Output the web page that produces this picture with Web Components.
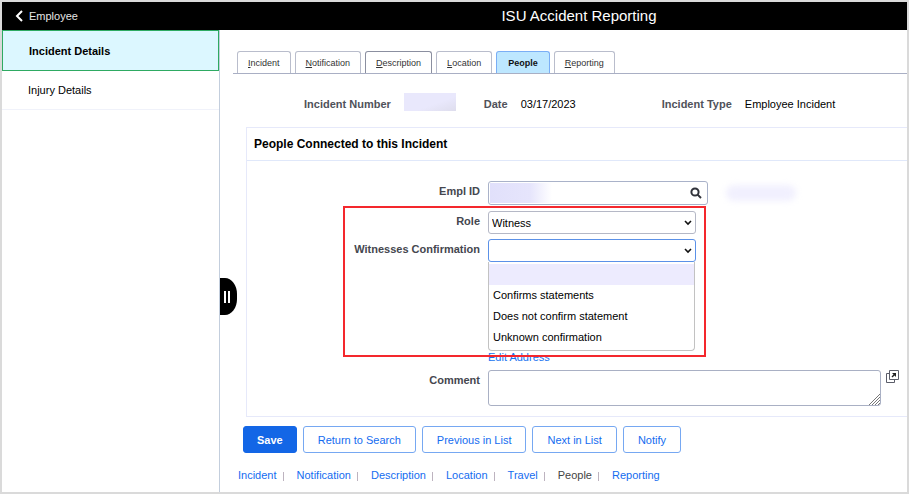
<!DOCTYPE html>
<html lang="en">
<head>
<meta charset="utf-8">
<title>ISU Accident Reporting</title>
<style>
  body {
    margin: 0;
    font: 11px/14px "Liberation Sans", Arial, sans-serif;
    color: #000;
    background: #fff;
  }
</style>
</head>
<body>
<accident-app></accident-app>

<script>
const define = (name, css, html, setup) => {
  const template = document.createElement('template');
  template.innerHTML = `<style>* { box-sizing: border-box; } ${css}</style>${html}`;
  customElements.define(name, class extends HTMLElement {
    constructor() {
      super();
      this.attachShadow({ mode: 'open' });
    }

    connectedCallback() {
      if (this.shadowRoot.childNodes.length) {
        return;
      }
      this.shadowRoot.appendChild(template.content.cloneNode(true));
      if (setup) {
        setup(this, this.shadowRoot);
      }
    }
  });
};

// label column and control column, shared by all the form rows
const rowStyles = `
  :host {
    display: grid;
    grid-template-columns: 233px minmax(0, 1fr);
    column-gap: 8px;
    align-items: start;
  }
  label {
    padding-top: 3px;
    text-align: right;
    font-weight: bold;
    color: #45474f;
  }
`;

define('app-header', `
  :host {
    display: grid;
    grid-template-columns: 249px 1fr;
    align-items: center;
    height: 28px;
    background: #000;
    color: #fff;
  }
  button {
    display: flex;
    align-items: center;
    gap: 5px;
    padding: 0 0 0 12px;
    border: 0;
    background: none;
    color: #e6e6e6;
    font: inherit;
  }
  h1 {
    margin: 0;
    font-size: 15px;
    line-height: 18px;
    font-weight: normal;
    text-align: center;
  }
`, `
  <button type="button">
    <svg width="10" height="12" viewBox="0 0 10 12" fill="none" stroke="#fff" stroke-width="2"><path d="M8 1 3 6l5 5"/></svg>
    <slot name="back"></slot>
  </button>
  <h1><slot></slot></h1>
`);

define('side-nav', `
  :host { display: block; border-right: 1px solid #c3cedd; }
  a {
    display: flex;
    align-items: center;
    height: 39px;
    padding-left: 26px;
    border-bottom: 1px solid #f0f2fa;
    color: #000;
    text-decoration: none;
  }
  a.active {
    height: 41px;
    padding-left: 26px;
    border: 1px solid #2eaa62;
    background: #dcf7ff;
    font-weight: bold;
  }
`, `
  <nav>
    <a class="active" href="#details">Incident Details</a>
    <a href="#injury">Injury Details</a>
  </nav>
`);

define('tab-bar', `
  :host {
    display: flex;
    gap: 4px;
    margin-left: 13px;
    padding-left: 4px;
    border-bottom: 1px solid #a9afc4;
  }
  button {
    height: 22px;
    padding: 0 10px;
    border: 1px solid #b9bdcc;
    border-bottom: 0;
    border-radius: 3px 3px 0 0;
    background: #fff;
    color: #333;
    font: inherit;
    font-size: 9px;
  }
  button.focus { border-color: #8b8fa0; }
  button.active {
    padding: 0 11px;
    border-color: #7aaef5;
    background: #bde7ff;
    color: #111;
    font-weight: bold;
  }
`, '', (host, root) => {
  ['Incident', 'Notification', 'Description', 'Location', 'People', 'Reporting'].forEach((name) => {
    const button = document.createElement('button');
    button.type = 'button';
    if (name === 'People') {
      button.className = 'active';
      button.textContent = name;
    } else {
      button.innerHTML = `<u>${name[0]}</u>${name.slice(1)}`;
    }
    if (name === 'Description') {
      button.className = 'focus';
    }
    root.appendChild(button);
  });
});

define('info-item', `
  :host { display: flex; align-items: flex-end; gap: 13px; white-space: nowrap; }
  b { color: #50525a; }
`, '<b></b><span><slot></slot></span>', (host, root) => {
  root.querySelector('b').textContent = host.getAttribute('label');
});

define('masked-value', `
  :host {
    display: block;
    width: 52px;
    height: 18px;
    background: linear-gradient(160deg, #e9e8fc 60%, #dedded);
  }
`, '');

define('lookup-field', `${rowStyles}
  .line { display: flex; align-items: center; gap: 18px; }
  .box {
    display: flex;
    align-items: center;
    width: 220px;
    height: 24px;
    border: 1px solid #a9b2c9;
    border-radius: 3px;
    background: #fff;
  }
  input {
    flex: 1;
    min-width: 0;
    height: 20px;
    margin-left: 1px;
    border: 0;
    outline: 0;
    font: inherit;
    background: linear-gradient(90deg, #e1e0fb, #e6e5fc 40px, #fff 62px);
  }
  button { display: flex; padding: 0 5px; border: 0; background: none; }
  .name {
    width: 70px;
    height: 16px;
    border-radius: 8px;
    background: #f1f0fe;
    filter: blur(3px);
  }
`, `
  <label for="empl">Empl ID</label>
  <div class="line">
    <div class="box">
      <input id="empl" type="text">
      <button type="button" aria-label="Look up">
        <svg width="12" height="12" viewBox="0 0 12 12" fill="none" stroke="#30323a" stroke-width="2"><circle cx="5" cy="5" r="3.6"/><path d="M7.6 7.6 11 11"/></svg>
      </button>
    </div>
    <div class="name"></div>
  </div>
`);

define('select-field', `${rowStyles}
  .wrap { position: relative; width: 208px; }
  select {
    display: block;
    appearance: none;
    width: 100%;
    height: 23px;
    padding: 0 20px 0 3px;
    border: 1px solid #b5b8c6;
    border-radius: 3px;
    outline: 0;
    background: #fff;
    color: #000;
    font: inherit;
  }
  :host([open]) select { border-color: #5b91e8; }
  svg { position: absolute; right: 4px; top: 8px; pointer-events: none; }
  ul {
    display: none;
    position: absolute;
    top: 23px;
    left: 0;
    right: 1px;
    z-index: 1;
    margin: 0;
    padding: 2px 0;
    list-style: none;
    border: 1px solid #c2c2c2;
    border-top: 0;
    border-radius: 0 0 4px 4px;
    background: #fff;
  }
  :host([open]) ul { display: block; }
  li { height: 21px; padding: 0 4px; line-height: 21px; }
  li:first-child { background: #edebfe; }
`, `
  <label for="field"></label>
  <div class="wrap">
    <select id="field"></select>
    <svg width="8" height="8" viewBox="0 0 8 8" fill="none" stroke="#111" stroke-width="1.6"><path d="m1 2 3 3 3-3"/></svg>
    <ul role="listbox"></ul>
  </div>
`, (host, root) => {
  const select = root.querySelector('select');
  const list = root.querySelector('ul');
  root.querySelector('label').textContent = host.getAttribute('label');
  host.getAttribute('options').split('|').forEach((text) => {
    select.add(new Option(text, text));
    if (host.hasAttribute('open')) {
      const item = document.createElement('li');
      item.setAttribute('role', 'option');
      item.textContent = text;
      list.appendChild(item);
    }
  });
});

define('comment-field', `${rowStyles}
  .line { display: flex; align-items: flex-start; gap: 5px; padding-right: 8px; }
  .area { position: relative; flex: 1; }
  textarea {
    display: block;
    width: 100%;
    height: 36px;
    border: 1px solid #a9b0c4;
    border-radius: 3px;
    outline: 0;
    resize: none;
    font: inherit;
  }
  .grip { position: absolute; right: 1px; bottom: 1px; }
  button { display: flex; padding: 0; border: 0; background: none; }
`, `
  <label for="comment">Comment</label>
  <div class="line">
    <div class="area">
      <textarea id="comment"></textarea>
      <svg class="grip" width="11" height="11" viewBox="0 0 11 11" stroke="#777" fill="none"><path d="M0 11 11 0M3 11l8-8M6 11l5-5M9 11l2-2"/></svg>
    </div>
    <button type="button" aria-label="Expand comment">
      <svg width="13" height="13" viewBox="0 0 13 13" fill="none" stroke="#5b5d69"><path d="M3.5 3.5h-3v9h8v-3"/><path d="M3.5.5h9v9h-9z" fill="#fff"/><path d="m6 7 3-3" stroke="#222" stroke-width="1.5"/><path d="M6 3h4v4z" fill="#222" stroke="none"/></svg>
    </button>
  </div>
`);

define('people-panel', `
  :host {
    display: block;
    margin: 16px 0 0 26px;
    border: 1px solid #e6e9fa;
    border-right: 0;
  }
  h2 {
    margin: 0;
    padding: 0 7px;
    font-size: 12px;
    line-height: 32px;
    border-bottom: 1px solid #e0e8fa;
  }
  form { display: grid; gap: 6px; padding: 20px 0 10px; }
  .role { position: relative; display: grid; gap: 5px; }
  .callout {
    position: absolute;
    left: 96px;
    top: -5px;
    z-index: 2;
    width: 363px;
    height: 151px;
    border: 2px solid #f4282d;
    pointer-events: none;
  }
  .address { margin: 82px 0 0 241px; }
  a { color: #1672f0; text-decoration: none; }
`, `
  <h2>People Connected to this Incident</h2>
  <form>
    <lookup-field></lookup-field>
    <div class="role">
      <select-field label="Role" options="Witness"></select-field>
      <select-field label="Witnesses Confirmation" options="|Confirms statements|Does not confirm statement|Unknown confirmation" open></select-field>
      <div class="callout"></div>
    </div>
    <div class="address"><a href="#address">Edit Address</a></div>
    <comment-field></comment-field>
  </form>
`);

define('action-button', `
  :host { display: block; }
  button {
    height: 27px;
    padding: 0 14px;
    border: 1px solid #76a8f2;
    border-radius: 3px;
    background: #fff;
    color: #146cf0;
    font: inherit;
  }
  :host([primary]) button {
    padding: 0 13px;
    border-color: #1366e6;
    background: #1366e6;
    color: #fff;
    font-weight: bold;
  }
`, '<button type="button"><slot></slot></button>');

define('page-links', `
  :host { display: flex; margin: 15px 18px 0; }
  a { color: #146cf0; text-decoration: none; }
  a:not([href]) { color: #444; }
  i { width: 1px; height: 9px; margin: 4px 13px 0 6px; background: #bdb3bf; }
`, '', (host, root) => {
  ['Incident', 'Notification', 'Description', 'Location', 'Travel', 'People', 'Reporting'].forEach((name, i) => {
    if (i > 0) {
      root.appendChild(document.createElement('i'));
    }
    const link = document.createElement('a');
    link.textContent = name;
    if (name !== 'People') {
      link.href = `#${name.toLowerCase()}`;
    }
    root.appendChild(link);
  });
});

define('accident-app', `
  :host {
    display: flex;
    flex-direction: column;
    box-sizing: border-box;
    min-height: 100vh;
    border: 2px solid #dadada;
  }
  .body { flex: 1; display: grid; grid-template-columns: 218px minmax(0, 1fr); }
  main { position: relative; padding-top: 21px; }
  .info { display: flex; align-items: flex-end; margin: 19px 0 0 84px; }
  .info info-item { margin-right: 28px; }
  .info .date { margin-right: 86px; }
  .actions { display: flex; gap: 6px; margin: 9px 23px 0; }
  .handle {
    position: absolute;
    left: 0;
    top: 248px;
    display: flex;
    align-items: center;
    justify-content: center;
    width: 17px;
    height: 37px;
    padding: 0 4px 0 0;
    border: 0;
    border-radius: 0 12px 12px 0 / 0 16px 16px 0;
    background: #000;
  }
`, `
  <app-header><span slot="back">Employee</span>ISU Accident Reporting</app-header>
  <div class="body">
    <side-nav></side-nav>
    <main>
      <button class="handle" type="button" aria-label="Collapse navigation">
        <svg width="6" height="12" viewBox="0 0 6 12" fill="#fff"><path d="M0 0h2v12H0zM4 0h2v12H4z"/></svg>
      </button>
      <tab-bar></tab-bar>
      <div class="info">
        <info-item label="Incident Number"><masked-value></masked-value></info-item>
        <info-item class="date" label="Date">03/17/2023</info-item>
        <info-item label="Incident Type">Employee Incident</info-item>
      </div>
      <people-panel></people-panel>
      <div class="actions">
        <action-button primary>Save</action-button>
        <action-button>Return to Search</action-button>
        <action-button>Previous in List</action-button>
        <action-button>Next in List</action-button>
        <action-button>Notify</action-button>
      </div>
      <page-links></page-links>
    </main>
  </div>
`);
</script>
</body>
</html>
